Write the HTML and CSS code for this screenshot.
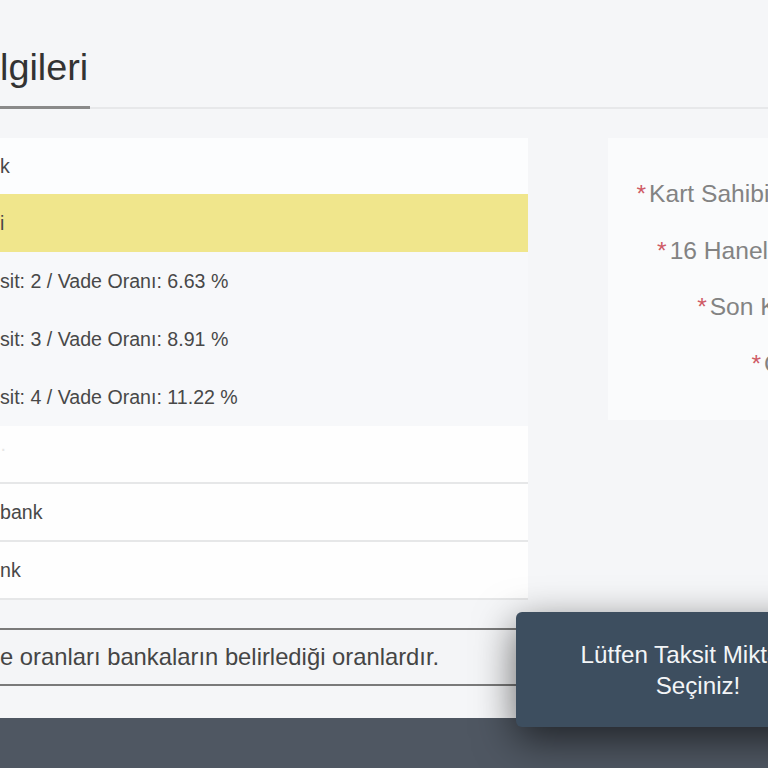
FILE: index.html
```html
<!DOCTYPE html>
<html lang="tr">
<head>
<meta charset="utf-8">
<title>Kart Bilgileri</title>
<link rel="stylesheet" href="styles.css">
</head>
<body>
<div class="page">
  <header class="page-head">
    <h1 class="page-title">lgileri</h1>
  </header>

  <main class="content">
    <section class="left-col">
      <ul class="bank-list">
        <li class="row row-bank row-first">k</li>
        <li class="row row-selected">i</li>
        <li class="row row-option">sit: 2 / Vade Oranı: 6.63 %</li>
        <li class="row row-option">sit: 3 / Vade Oranı: 8.91 %</li>
        <li class="row row-option">sit: 4 / Vade Oranı: 11.22 %</li>
        <li class="row row-bank row-lined"><span class="faint">·</span></li>
        <li class="row row-bank row-lined">bank</li>
        <li class="row row-bank row-lined">nk</li>
      </ul>
      <p class="note">e oranları bankaların belirlediği oranlardır.</p>
    </section>

    <section class="right-col">
      <form class="card-form">
        <div class="form-row"><label class="form-label"><span class="req">*</span>Kart Sahibinin Adı Soyadı</label><input class="form-input" type="text"></div>
        <div class="form-row"><label class="form-label"><span class="req">*</span>16 Haneli Kredi Kart No</label><input class="form-input" type="text"></div>
        <div class="form-row"><label class="form-label"><span class="req">*</span>Son Kullanma Tarihi</label><input class="form-input" type="text"></div>
        <div class="form-row"><label class="form-label"><span class="req">*</span>CVV Numarası</label><input class="form-input" type="text"></div>
      </form>
    </section>
  </main>

  <footer class="page-foot"></footer>

  <div class="toast">Lütfen Taksit Miktarını Seçiniz!</div>
</div>
</body>
</html>
```

FILE: styles.css
```css
html, body {
  margin: 0;
  padding: 0;
  width: 768px;
  height: 768px;
  overflow: hidden;
  background: #f5f6f8;
  font-family: "Liberation Sans", Arial, sans-serif;
}

.page {
  position: relative;
  width: 768px;
  height: 768px;
  overflow: hidden;
}

.page-head {
  padding-top: 48px;
  border-bottom: 2px solid #e7e8ea;
}

.page-title {
  display: inline-block;
  margin: 0 0 -2px 0;
  padding: 0 2px 20px 0;
  font-size: 37.8px;
  line-height: 38px;
  font-weight: normal;
  color: #333;
  border-bottom: 3px solid #8a8a8a;
}

.content {
  display: flex;
  gap: 80px;
  margin-top: 29px;
}

.left-col {
  flex: 0 0 528px;
  display: flex;
  flex-direction: column;
}

.right-col {
  flex: 0 0 640px;
}

.bank-list {
  list-style: none;
  margin: 0;
  padding: 0;
}

.row {
  box-sizing: border-box;
  height: 58px;
  display: flex;
  align-items: center;
  font-size: 19.6px;
  color: #484848;
  white-space: nowrap;
}

.row-first {
  height: 56px;
}

.row-bank {
  background: #fcfdfe;
}

.row-selected {
  background: #f0e68c;
}

.row-option {
  background: #f7f8fa;
}

.row-lined {
  border-bottom: 2px solid #e6e7e8;
  background: #fefefe;
}

.faint {
  color: #e6e6e6;
  margin-top: -12px;
}

.note {
  box-sizing: border-box;
  margin: 28px 0 0 0;
  height: 58px;
  display: flex;
  align-items: center;
  border-top: 2px solid #7a7a7a;
  border-bottom: 2px solid #7a7a7a;
  background: #f4f5f7;
  font-size: 23.8px;
  color: #454545;
  white-space: nowrap;
}

.card-form {
  box-sizing: border-box;
  height: 282px;
  padding: 28px 0 28px 0;
  background: #fafbfc;
}

.form-row {
  display: grid;
  grid-template-columns: 320px 280px;
  column-gap: 16px;
  align-items: center;
  height: 56.5px;
}

.form-label {
  text-align: right;
  white-space: nowrap;
  font-size: 24.6px;
  color: #838383;
}

.req {
  color: #cf5b66;
  margin-right: 3px;
}

.form-input {
  height: 34px;
  border: 1px solid #ddd;
  background: #fff;
}

.page-foot {
  margin-top: 32px;
  height: 60px;
  background: #4f5762;
}

.toast {
  position: absolute;
  left: 516px;
  top: 612px;
  width: 364px;
  height: 115px;
  box-sizing: border-box;
  padding: 0 40px;
  display: flex;
  align-items: center;
  justify-content: center;
  text-align: center;
  background: #3d4e5f;
  border-radius: 6px;
  color: #f3f5f7;
  font-size: 24.2px;
  line-height: 31px;
  box-shadow: 0 12px 40px rgba(0, 0, 0, 0.6);
}
```
